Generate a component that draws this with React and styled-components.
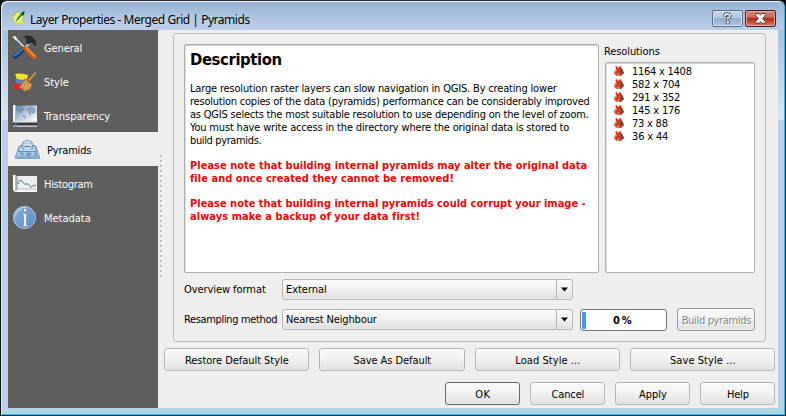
import React, { useLayoutEffect, useRef, useState } from "react";
import styled, { createGlobalStyle, css } from "styled-components";

const GlobalStyle = createGlobalStyle`
  * { box-sizing: border-box; }
  body {
    margin: 0;
    background: #000;
    color: #000;
    font-family: "DejaVu Sans Condensed", "DejaVu Sans", sans-serif;
    font-stretch: condensed;
    font-size: 11px;
    line-height: 13px;
    overflow: hidden;
  }
`;

const Line = styled.span`
  display: block;
  flex: none;
  width: ${(p) => p.$width}px;
  white-space: pre;
`;

/* One line of text whose tracking is adjusted to fill a given width. */
function Text({ width, children }) {
  const ref = useRef(null);
  const [tracking, setTracking] = useState(0);
  useLayoutEffect(() => {
    const natural = ref.current.getBoundingClientRect().width;
    setTracking((width + 0.7 - natural) / children.length);
  }, [width, children]);
  return (
    <Line $width={width}>
      <span ref={ref} style={{ letterSpacing: tracking }}>{children}</span>
    </Line>
  );
}

const Window = styled.div`
  width: 786px;
  height: 416px;
  padding: 0 7px 6px 7px;
  border: 1px solid #0b0b0b;
  border-top-color: #2b2b30;
  border-radius: 7px 7px 0 0;
  background:
    linear-gradient(#98b3d3, #b9cfe9) 0 0 / 100% 29px no-repeat,
    linear-gradient(#a9c3e0, #d9e6f5) 0 29px / 100% 90px no-repeat,
    #b9cfea;
  box-shadow: inset 1px 1px 0 #e8f1fa, inset -1px -1px 0 #25c4e2;
`;

const TitleBar = styled.header`
  display: flex;
  height: 29px;
  padding: 9px 2px 0 4px;
`;

const Title = styled.h1`
  flex: 1;
  margin: 1px 0 0 4px;
  font: 400 12px/17px "Noto Sans", sans-serif;
  text-shadow: 0 0 6px #dce9f7;
`;

const CaptionButtons = styled.div`
  display: flex;
  gap: 2px;
`;

const CaptionButton = styled.button`
  display: block;
  width: 31px;
  height: 17px;
  padding: 0;
  border: 1px solid ${(p) => (p.$close ? "#431c24" : "#596c86")};
  border-radius: 2px;
  background: ${(p) =>
    p.$close
      ? "linear-gradient(#d98c80 0, #c9604f 45%, #a92b16 50%, #c95036 75%, #d6836c 100%)"
      : "linear-gradient(#c3d6eb 0, #b3c9e2 45%, #91adce 50%, #a9c3df 100%)"};
  box-shadow: inset 0 0 0 1px ${(p) => (p.$close ? "#e2a79d" : "#d5e3f2")};
  svg { display: block; margin: 0 auto; }
`;

const Client = styled.div`
  display: flex;
  width: 770px;
  height: 378px;
  background: #efefef;
`;

const Sidebar = styled.nav`
  flex: none;
  width: 150px;
  background: #5e5e5e;
`;

const NavItem = styled.div`
  display: flex;
  align-items: center;
  height: 34px;
  padding: 0 0 0 ${(p) => (p.$selected ? 7 : 4)}px;
  gap: 7px;
  color: ${(p) => (p.$selected ? "#000" : "#fff")};
  background: ${(p) => (p.$selected ? "#efefef" : "transparent")};
  svg { flex: none; width: 25px; height: 25px; }
`;

const NavLabel = styled.div`
  margin-top: 3px;
`;

const Splitter = styled.div`
  flex: none;
  width: 4px;
  height: 123px;
  margin: 125px 0 0 2px;
  background:
    linear-gradient(#bdbdbd, #bdbdbd) 0 0 / 2px 2px,
    linear-gradient(#fff, #fff) 1px 1px / 2px 2px;
  background:
    linear-gradient(#bdbdbd 0 2px, transparent 2px) 0 0 / 2px 5px repeat-y,
    linear-gradient(transparent 0 1px, #fff 1px 3px, transparent 3px) 1px 0 / 2px 5px repeat-y;
`;

const Main = styled.main`
  flex: none;
  width: 614px;
  padding-top: 3px;
`;

const Group = styled.section`
  width: 593px;
  height: 309px;
  margin-left: 9px;
  padding: 10px 10px 0 10px;
  border: 1px solid #b9b9b9;
  border-radius: 3px;
`;

const Upper = styled.div`
  display: flex;
  gap: 6px;
`;

const panel = css`
  border: 1px solid #b0b0b0;
  border-radius: 2px;
  background: #fff;
  box-shadow: inset 0 1px 0 #d4d4d4, inset 1px 0 0 #dedede;
`;

const Description = styled.article`
  ${panel}
  width: 415px;
  height: 229px;
  padding: 5px 0 0 5px;
`;

const Heading = styled.h2`
  margin: 0 0 12px;
  font-size: 16.5px;
  line-height: 20px;
`;

const Paragraph = styled.div`
  margin-bottom: 12px;
`;

const Warning = styled(Paragraph)`
  color: #ff0000;
  font-weight: 700;
`;

const Side = styled.div`
  width: 150px;
`;

const SideLabel = styled.div`
  height: 18px;
  padding-top: 1px;
  margin-left: -1px;
`;

const ResolutionList = styled.ul`
  ${panel}
  height: 211px;
  margin: 0;
  padding: 2px 0 0 6px;
  list-style: none;
`;

const Resolution = styled.li`
  display: flex;
  align-items: center;
  gap: 6px;
  height: 13px;
  svg { flex: none; }
`;

const Form = styled.div`
  display: grid;
  grid-template-columns: 98px 291px auto;
  grid-template-rows: 21px 23px;
  row-gap: 8px;
  margin-top: 6px;
  align-items: center;
`;

const surface = css`
  border: 1px solid #b4b4b4;
  border-radius: 3px;
  background: linear-gradient(#fafafa, #f1f1f1 50%, #dfdfdf);
  box-shadow: inset 0 0 0 1px rgba(255, 255, 255, 0.35);
`;

const Select = styled.div`
  ${surface}
  display: flex;
  justify-content: space-between;
  height: 21px;
  padding: 3px 0 0 3px;
`;

const Arrow = styled.span`
  width: 16px;
  height: 19px;
  margin-top: -3px;
  padding: 7px 0 0 4px;
  border-left: 1px solid #b4b4b4;
  svg { display: block; }
`;

const Actions = styled.div`
  display: flex;
  align-items: center;
  padding-left: 7px;
  gap: 10px;
`;

const Progress = styled.div`
  display: flex;
  width: 87px;
  height: 22px;
  padding: 1px;
  border: 1px solid #787878;
  border-radius: 3px;
  background: #fff;
  font-weight: 700;
`;

const ProgressFill = styled.div`
  width: 4px;
  height: 17px;
  margin-top: 1px;
  border-radius: 1px;
  background: #3b9bf8;
`;

const ProgressLabel = styled.div`
  padding: 3px 0 0 27px;
`;

const Button = styled.button`
  ${surface}
  display: flex;
  flex: none;
  justify-content: center;
  align-items: center;
  width: ${(p) => p.$width}px;
  height: 23px;
  padding: 1px 0 0;
  color: #000;
  font: inherit;
  font-stretch: condensed;
  ${(p) => p.$primary && css`border-color: #666;`}
  ${(p) =>
    p.$disabled &&
    css`
      border-color: #979797;
      color: #848484;
      text-shadow: 1px 1px 0 #fff;
    `}
`;

const StyleButtons = styled.div`
  display: flex;
  gap: 10px;
  margin-top: 6px;
`;

const DialogButtons = styled.div`
  display: flex;
  gap: 10px;
  margin: 11px 0 0 281px;
`;

function AppIcon() {
  return (
    <svg width="14" height="15" viewBox="0 0 14 15">
      <ellipse cx="6" cy="8.3" rx="5.2" ry="5.7" fill="#eef16e" stroke="#b5c64c" strokeWidth=".7" />
      <ellipse cx="6" cy="8.6" rx="1.9" ry="2.6" fill="#fbffc9" />
      <path d="M8 10l4 4" stroke="#dce64e" strokeWidth="2.4" />
      <path d="m3.6 12.2 1.8-5L7 8.4Z" fill="#2c8a26" />
      <path d="M5.5 9 11 2.8" stroke="#2c8a26" strokeWidth="1.8" />
      <path d="M8 4.6 12.4.6l-.3 4.8Z" fill="#0d5c1c" />
      <path d="M1.5 6 4 3.2" stroke="#7dbb3c" />
    </svg>
  );
}

function ToolsIcon() {
  return (
    <svg viewBox="0 0 25 25">
      <path d="M2 2 13 13" stroke="#d9dcdd" strokeWidth="1.6" />
      <path d="M.5 1.8 3 .8l2.6 3.4-2 1.2Z" fill="#e9e9e9" />
      <path d="M19 7 12 14" stroke="#c8c8c4" strokeWidth="2.2" />
      <path d="M11 2Q16-.5 20 1.5l3 3 1.4 5-1.6 2-1.7-3.3-2.3-.5-1.8 2-3.5-3 1.3-1.8Q14 2.7 11 2Z" fill="#272b2c" />
      <path d="M11.5 14.5 3.2 22" stroke="#173e77" strokeWidth="4.6" strokeLinecap="round" />
      <path d="M10.5 14 3 20.6" stroke="#4e87cf" strokeWidth="1.5" strokeLinecap="round" />
      <path d="m13.5 13.5 8.7 8.5" stroke="#d65d08" strokeWidth="4.4" strokeLinecap="round" />
      <path d="m14.5 12.7 8.5 8.5" stroke="#ff9d32" strokeWidth="1.6" strokeLinecap="round" />
    </svg>
  );
}

function BrushIcon() {
  return (
    <svg viewBox="0 0 25 25">
      <path d="M3 5q6-1.5 13 1l-1 5q-6 1-10-.5Z" fill="#f4e334" />
      <path d="M4 9.5q6 2 11 1l-3 5q-5 .5-9-1Z" fill="#5b86c6" />
      <path d="M2.5 14q6 1 10 .5l-2 5q-5 1-9-.5Z" fill="#e42425" />
      <path d="m17 12 7-8" stroke="#916326" strokeWidth="2.6" strokeLinecap="round" />
      <path d="m17 11.2 6.6-7.5" stroke="#dfb15c" strokeWidth="1.2" />
      <path d="m13 9.5 7.5 6-2.5 5.2-5.5 1.8-5.5-4.7 3.5-3Z" fill="#ca8c42" stroke="#9b642b" strokeWidth=".6" />
      <path d="m12.5 13-2.5 5m5-4-2 6m5-5-2 5" stroke="#edbd78" />
    </svg>
  );
}

function TransparencyIcon() {
  return (
    <svg viewBox="0 0 25 25">
      <defs>
        <linearGradient id="sky" x2="1" y2=".8">
          <stop stopColor="#5c83b5" />
          <stop offset=".5" stopColor="#b9cce0" />
          <stop offset="1" stopColor="#f3f6f8" />
        </linearGradient>
      </defs>
      <path d="M4 2.5h21v15.5H4Z" fill="url(#sky)" />
      <path d="m5 6 3-2 4 1 1 2-3 1v3l-2-2-3-1Zm10-1 4-2 4 2 1 4-3 2-2-2v4l-2-2-1-3-2-1Zm-4 7 3 1-1 3-2-2Z" fill="#6e8aa8" opacity=".65" />
      <path d="M1 2h2.6v16.5H1Z" fill="#f7f7f7" />
      <path d="M1 18h24v1.4H1Z" fill="#e4e4e4" />
      <path d="M1 21h24" stroke="#26303c" strokeWidth="1.6" />
      <path d="M1 23.2h24" stroke="#ddd" strokeWidth="1.2" />
      <path d="M2.6 19.5h2v4h-2Z" fill="#407dbe" />
    </svg>
  );
}

function PyramidsIcon() {
  return (
    <svg viewBox="0 0 25 25">
      <path d="M4 9.5h17L24.5 20v1.5H.5V20Z" fill="#a9cee9" stroke="#7597b7" />
      <path d="M1 18.5h23l.5 3H.5Z" fill="#86afd4" />
      <path d="M5 8.5h15l1.5 6h-18Z" fill="#bedbec" stroke="#7090ac" />
      <path d="M8.5 4.5q4-2.2 8 0l2 5h-12Z" fill="#a3c5df" stroke="#6c8ead" />
      <path d="M9.5 5h6m-7.5 4.5 2-2h5l2 2" fill="none" stroke="#d4e8f3" strokeWidth="1.3" />
      <path d="m4 16 2-1 3 1-1 3-2-1.5Zm7 0 4-1 2 2-3 3-2-1Zm7.500 0 2.500-1 1.500 3-2 1.500Zm-12-5 2-1 1 2-1 1Zm9 0 2-1 1.500 2-2 1Z" fill="#5682b1" opacity=".6" />
    </svg>
  );
}

function HistogramIcon() {
  return (
    <svg viewBox="0 0 25 25">
      <path d="M1 4h2.6v15.500H1Z" fill="#fafafa" />
      <path d="M4.500 5H25v15H4.500Z" fill="#efefef" />
      <path d="M2.500 19.300H25v1.700H2.500Z" fill="#fafafa" />
      <path d="M5.500 5.500v13M4.500 18H24" stroke="#b4b8bc" strokeWidth=".8" />
      <path d="m6 13 1.500-3.500L9 9l4 4.500 2.500-1 3.500 4 3-2.500 2 1" fill="none" stroke="#4a75a2" strokeWidth="1" />
    </svg>
  );
}

function InfoIcon() {
  return (
    <svg viewBox="0 0 25 25">
      <defs>
        <linearGradient id="info" y2="1" x2="1">
          <stop stopColor="#8ab2e0" />
          <stop offset="1" stopColor="#5388c7" />
        </linearGradient>
      </defs>
      <circle cx="12.500" cy="12.500" r="11" fill="url(#info)" stroke="#b4cee9" strokeWidth="1" />
      <path d="M2.500 14Q5 4 15.500 2Q5 0 2.500 10Z" fill="#b5cfea" opacity=".7" />
      <path d="M11.500 3.500h3v3h-3Zm-1 5h4V20h1.200v1.500h-5.200V20h1.200V10h-1.200Z" fill="#f7fbff" stroke="#4e5e72" strokeWidth=".4" />
    </svg>
  );
}

function NoPyramidIcon() {
  return (
    <svg width="14" height="13" viewBox="0 0 14 13">
      <path d="M1.500 7.500 5 3l3-1.500L10 4l2 4-3 3H4Z" fill="#b98d62" />
      <path d="m8 2.500 2.300 1.500L12 8l-3.500 3Z" fill="#6d4a34" />
      <path d="m4 1.500 5 9M8.800 1.500 3.600 9.500" stroke="#ee2a1e" strokeWidth="1.900" />
    </svg>
  );
}

function HelpGlyph() {
  return (
    <svg width="15" height="15" viewBox="0 0 15 15" fill="none">
      <path d="M5 5.500V4.500Q5 3 7.500 3T10 5Q10 6.300 7.700 7v2" stroke="#46505e" strokeWidth="3.400" />
      <path d="M6 10h3.400v2.800H6Z" fill="#fff" stroke="#46505e" strokeWidth=".8" />
      <path d="M5 5V4.500Q5 3 7.500 3T10 5Q10 6.300 7.700 7v1.800" stroke="#fff" strokeWidth="1.600" />
    </svg>
  );
}

function CloseGlyph() {
  return (
    <svg width="15" height="15" viewBox="0 0 15 15">
      <path d="m2 3.300 1-.8h3l1.500 1.600L9 2.500h3l1 .8-3.200 4.200 3.200 4-1 .8H9l-1.500-1.600L6 12.300H3l-1-.8 3.200-4Z" fill="#f6f6f6" stroke="#513e42" />
    </svg>
  );
}

const pages = [
  { name: "General", width: 37.5, Icon: ToolsIcon },
  { name: "Style", width: 24, Icon: BrushIcon },
  { name: "Transparency", width: 65.5, Icon: TransparencyIcon },
  { name: "Pyramids", width: 43.5, Icon: PyramidsIcon, selected: true },
  { name: "Histogram", width: 48, Icon: HistogramIcon },
  { name: "Metadata", width: 46, Icon: InfoIcon },
];

const resolutions = [
  ["1164 x 1408", 59],
  ["582 x 704", 47.5],
  ["291 x 352", 47.5],
  ["145 x 176", 47.5],
  ["73 x 88", 35],
  ["36 x 44", 35.5],
];

function ComboBox({ value, width }) {
  return (
    <Select>
      <Text width={width}>{value}</Text>
      <Arrow>
        <svg width="7" height="5" viewBox="0 0 7 5"><path d="M0 .5h7L3.500 4.500Z" fill="#000" /></svg>
      </Arrow>
    </Select>
  );
}

export default function App() {
  return (
    <>
      <GlobalStyle />
      <Window>
        <TitleBar>
          <AppIcon />
          <Title><Text width={219}>Layer Properties - Merged Grid | Pyramids</Text></Title>
          <CaptionButtons>
            <CaptionButton aria-label="Help"><HelpGlyph /></CaptionButton>
            <CaptionButton $close aria-label="Close"><CloseGlyph /></CaptionButton>
          </CaptionButtons>
        </TitleBar>
        <Client>
          <Sidebar>
            {pages.map(({ name, width, Icon, selected }) => (
              <NavItem key={name} $selected={selected}>
                <Icon />
                <NavLabel><Text width={width}>{name}</Text></NavLabel>
              </NavItem>
            ))}
          </Sidebar>
          <Splitter />
          <Main>
            <Group>
              <Upper>
                <Description>
                  <Heading><Text width={91}>Description</Text></Heading>
                  <Paragraph>
                    <Text width={366}>Large resolution raster layers can slow navigation in QGIS. By creating lower</Text>
                    <Text width={399}>resolution copies of the data (pyramids) performance can be considerably improved</Text>
                    <Text width={398}>as QGIS selects the most suitable resolution to use depending on the level of zoom.</Text>
                    <Text width={378.5}>You must have write access in the directory where the original data is stored to</Text>
                    <Text width={70.5}>build pyramids.</Text>
                  </Paragraph>
                  <Warning>
                    <Text width={396.5}>Please note that building internal pyramids may alter the original data</Text>
                    <Text width={263}>file and once created they cannot be removed!</Text>
                  </Warning>
                  <Warning>
                    <Text width={395}>Please note that building internal pyramids could corrupt your image -</Text>
                    <Text width={229}>always make a backup of your data first!</Text>
                  </Warning>
                </Description>
                <Side>
                  <SideLabel><Text width={55}>Resolutions</Text></SideLabel>
                  <ResolutionList>
                    {resolutions.map(([size, width]) => (
                      <Resolution key={size}>
                        <NoPyramidIcon />
                        <Text width={width}>{size}</Text>
                      </Resolution>
                    ))}
                  </ResolutionList>
                </Side>
              </Upper>
              <Form>
                <Text width={81}>Overview format</Text>
                <ComboBox value="External" width={40} />
                <span />
                <Text width={92.5}>Resampling method</Text>
                <ComboBox value="Nearest Neighbour" width={90} />
                <Actions>
                  <Progress>
                    <ProgressFill />
                    <ProgressLabel><Text width={20}>0%</Text></ProgressLabel>
                  </Progress>
                  <Button $width={78} $disabled><Text width={68.5}>Build pyramids</Text></Button>
                </Actions>
              </Form>
            </Group>
            <StyleButtons>
              <Button $width={145}><Text width={103}>Restore Default Style</Text></Button>
              <Button $width={146}><Text width={77}>Save As Default</Text></Button>
              <Button $width={145}><Text width={64.5}>Load Style ...</Text></Button>
              <Button $width={145}><Text width={65}>Save Style ...</Text></Button>
            </StyleButtons>
            <DialogButtons>
              <Button $width={75} $primary><Text width={14.5}>OK</Text></Button>
              <Button $width={75}><Text width={32}>Cancel</Text></Button>
              <Button $width={75}><Text width={27}>Apply</Text></Button>
              <Button $width={75}><Text width={21}>Help</Text></Button>
            </DialogButtons>
          </Main>
        </Client>
      </Window>
    </>
  );
}
